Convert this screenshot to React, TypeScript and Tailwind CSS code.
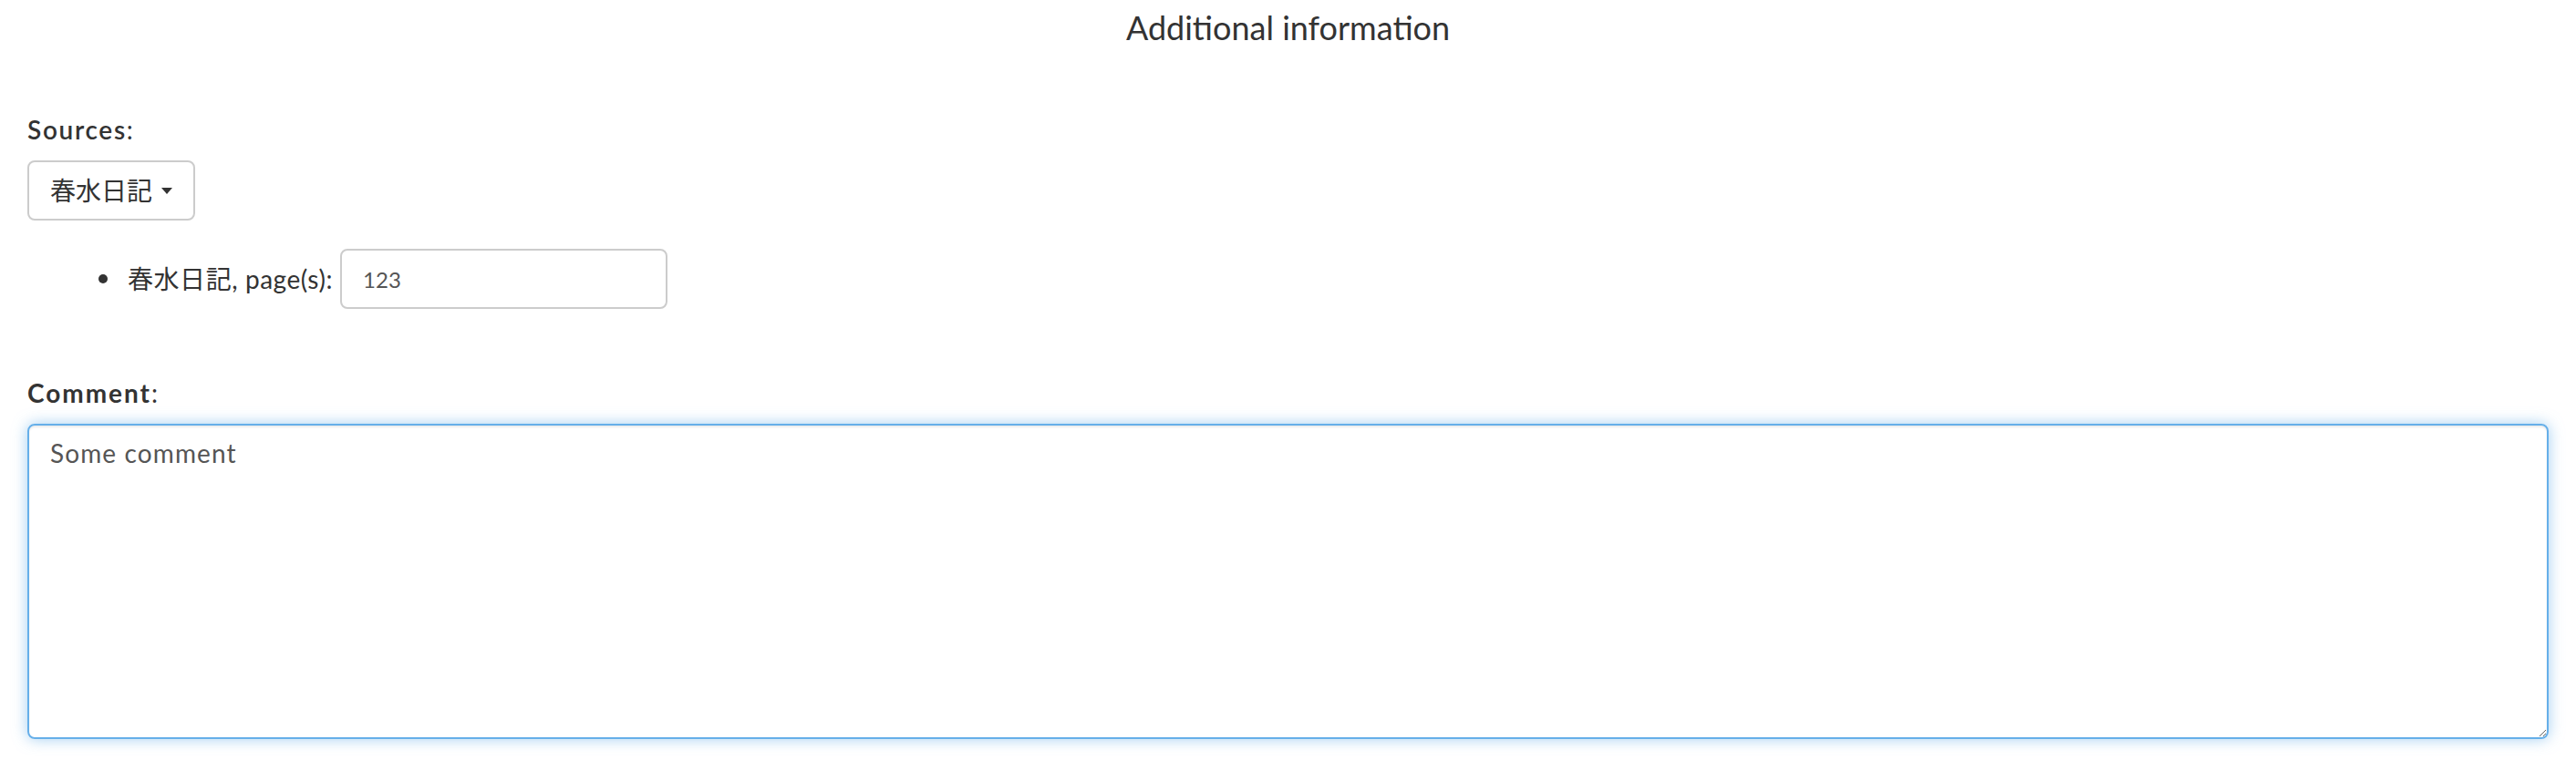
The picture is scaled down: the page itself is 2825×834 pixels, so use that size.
const font = { fontFamily: 'Lato, "Noto Sans CJK JP", sans-serif' };

export default function App() {
  return (
    <main
      className="w-full min-h-screen bg-white px-[30px] text-[#333] text-[28px] leading-[40px] tracking-[0.04em]"
      style={font}
    >
      <h4 className="mt-[10px] text-center text-[36px] leading-[40px] font-normal tracking-normal">Additional information</h4>

      <div className="mt-[72px] font-semibold tracking-[0.06em]">
        Sources<span className="font-normal">:</span>
      </div>

      <button
        type="button"
        className="mt-[14px] flex h-[66px] items-center gap-[10px] rounded-[8px] border-2 border-[#ccc] bg-white px-[23px] text-[28px] tracking-normal"
        style={font}
      >
        春水日記
        <span className="inline-block h-0 w-0 border-x-[6px] border-t-[7px] border-x-transparent border-t-[#333]" />
      </button>

      <ul className="mt-[31px] pl-[78px]">
        <li className="flex items-center">
          <span className="mr-[22px] inline-block h-[10px] w-[10px] rounded-full bg-[#333]" />
          <span className="tracking-[0.02em]">春水日記, page(s):</span>
          <input
            defaultValue="123"
            className="ml-[8px] h-[66px] w-[359px] rounded-[8px] border-2 border-[#ccc] px-[23px] text-[24px] tracking-normal text-[#555] outline-none"
            style={font}
          />
        </li>
      </ul>

      <div className="mt-[72px] font-bold tracking-[0.07em]">
        Comment<span className="font-normal">:</span>
      </div>

      <textarea
        defaultValue="Some comment"
        className="mt-[14px] block h-[346px] w-full rounded-[8px] border-2 border-[#66afe9] px-[23px] py-[10px] text-[28px] leading-[40px] tracking-[0.04em] text-[#555] outline-none shadow-[inset_0_2px_2px_rgba(0,0,0,0.075),0_0_16px_rgba(102,175,233,0.6)]"
        style={font}
      />
    </main>
  );
}
